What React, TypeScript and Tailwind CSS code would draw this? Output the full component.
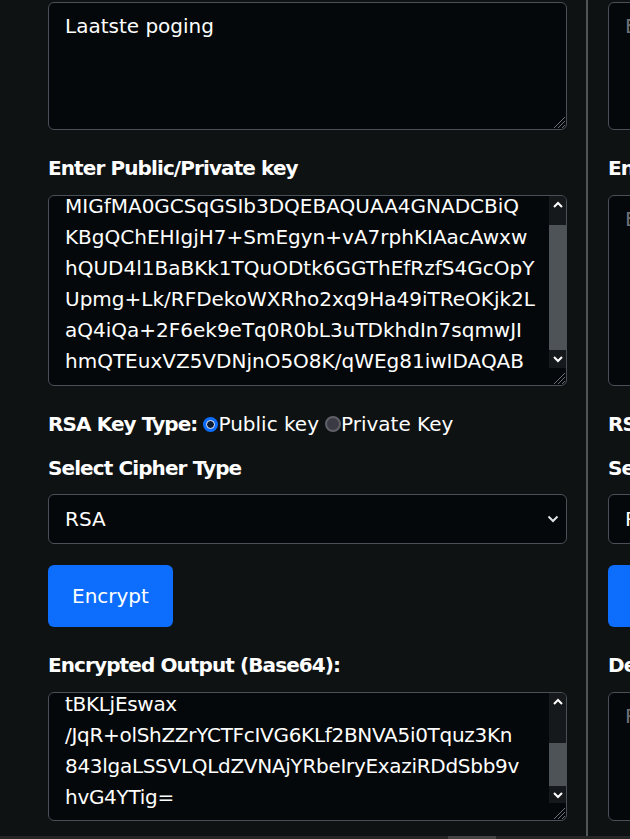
import React from "react";

const keyLines = [
  "MIGfMA0GCSqGSIb3DQEBAQUAA4GNADCBiQ",
  "KBgQChEHIgjH7+SmEgyn+vA7rphKIAacAwxw",
  "hQUD4l1BaBKk1TQuODtk6GGThEfRzfS4GcOpY",
  "Upmg+Lk/RFDekoWXRho2xq9Ha49iTReOKjk2L",
  "aQ4iQa+2F6ek9eTq0R0bL3uTDkhdIn7sqmwJI",
  "hmQTEuxVZ5VDNjnO5O8K/qWEg81iwIDAQAB",
];

const outLines = [
  "tBKLjEswax",
  "/JqR+olShZZrYCTFcIVG6KLf2BNVA5i0Tquz3Kn",
  "843lgaLSSVLQLdZVNAjYRbeIryExaziRDdSbb9v",
  "hvG4YTig=",
];

function Grip() {
  return (
    <svg width="14" height="14" viewBox="0 0 14 14" className="block">
      <line x1="3" y1="14" x2="14" y2="3" stroke="#6c737a" strokeWidth="1" />
      <line x1="7" y1="14" x2="14" y2="7" stroke="#6c737a" strokeWidth="1" />
      <line x1="11" y1="14" x2="14" y2="11" stroke="#6c737a" strokeWidth="1" />
    </svg>
  );
}

function Chevron({ up }: { up?: boolean }) {
  return (
    <svg width="10" height="7" viewBox="0 0 10 7" className="block">
      <polyline
        points={up ? "1,6 5,2 9,6" : "1,1 5,5 9,1"}
        fill="none"
        stroke="#ffffff"
        strokeWidth="2"
      />
    </svg>
  );
}

function Scrollbar({ top, thumb, bottom }: { top: number; thumb: number; bottom: number }) {
  return (
    <div className="w-[17px] shrink-0 flex flex-col">
      <div className="bg-[#16191c] flex justify-center pt-[5px]" style={{ height: top }}>
        <Chevron up />
      </div>
      <div className="bg-[#4e5358]" style={{ height: thumb }} />
      <div className="bg-[#16191c] flex justify-center pt-[6px]" style={{ height: bottom }}>
        <Chevron />
      </div>
      <div className="flex-1 flex items-end justify-end pr-[1px] pb-[1px]">
        <Grip />
      </div>
    </div>
  );
}

function PlainBox({ h, children, placeholder }: { h: string; children?: React.ReactNode; placeholder?: boolean }) {
  return (
    <div
      className={`${h} relative border border-[#495057] rounded-[6px] bg-[#05080a] overflow-hidden px-4 pt-2 text-[20px] leading-[31px] whitespace-pre ${
        placeholder ? "text-[#6c7278]" : "text-white"
      }`}
    >
      {children}
      <div className="absolute right-[1px] bottom-[1px]">
        <Grip />
      </div>
    </div>
  );
}

function Label({ children, className = "" }: { children: React.ReactNode; className?: string }) {
  return (
    <div className={`text-[20px] leading-[30px] font-bold tracking-[-0.045em] text-white whitespace-nowrap ${className}`}>
      {children}
    </div>
  );
}

function Column({ decrypt }: { decrypt?: boolean }) {
  return (
    <div className="w-[519px] shrink-0 flex flex-col">
      {decrypt ? (
        <div className="mt-[2px]">
          <PlainBox h="h-[128px]" placeholder>
            Enter text to decrypt
          </PlainBox>
        </div>
      ) : (
        <div className="mt-[2px]">
          <PlainBox h="h-[128px]">Laatste poging</PlainBox>
        </div>
      )}

      <Label className="mt-[23px]">Enter Public/Private key</Label>

      {decrypt ? (
        <div className="mt-[12px]">
          <PlainBox h="h-[191px]" placeholder>
            Enter key
          </PlainBox>
        </div>
      ) : (
        <div className="mt-[12px] h-[191px] border border-[#495057] rounded-[6px] bg-[#05080a] overflow-hidden flex">
          <div className="flex-1 min-w-0 overflow-hidden pl-4 text-[20px] leading-[31px] text-white whitespace-pre">
            <div className="mt-[-5px]">
              {keyLines.map((l) => (
                <div key={l}>{l}</div>
              ))}
            </div>
          </div>
          <Scrollbar top={29} thumb={125} bottom={18} />
        </div>
      )}

      <div className="mt-[23px] flex items-center h-[30px] text-[20px] text-white whitespace-nowrap">
        <span className="font-bold tracking-[-0.045em]">RSA Key Type:</span>
        <span className="ml-[6px] w-[15px] h-[15px] rounded-full bg-[#0d6efd] flex items-center justify-center shrink-0">
          <span className="w-[9px] h-[9px] rounded-full border border-[#e8f0ff] bg-[#0b1a33]" />
        </span>
        <span>Public key</span>
        <span className="ml-[6px] w-[16px] h-[16px] rounded-full bg-[#3a3b44] border-2 border-[#5f6068] shrink-0" />
        <span>Private Key</span>
      </div>

      <Label className="mt-[14px]">Select Cipher Type</Label>

      <div className="mt-[11px] h-[50px] border border-[#495057] rounded-[6px] bg-[#05080a] flex items-center justify-between pl-4 pr-[7px] text-[20px] leading-[30px] text-white">
        <span>RSA</span>
        <svg width="12" height="8" viewBox="0 0 12 8" className="block">
          <polyline points="1.5,1.5 6,6 10.5,1.5" fill="none" stroke="#dee2e6" strokeWidth="2" />
        </svg>
      </div>

      <div className="mt-[21px] flex">
        <div className="h-[62px] px-6 rounded-[6px] bg-[#0d6efd] text-white text-[20px] leading-[30px] font-medium flex items-center">
          {decrypt ? "Decrypt" : "Encrypt"}
        </div>
      </div>

      <Label className="mt-[23px]">{decrypt ? "Decrypted Output:" : "Encrypted Output (Base64):"}</Label>

      {decrypt ? (
        <div className="mt-[12px]">
          <PlainBox h="h-[129px]" placeholder>
            Plain text output
          </PlainBox>
        </div>
      ) : (
        <div className="mt-[12px] h-[129px] border border-[#495057] rounded-[6px] bg-[#05080a] overflow-hidden flex">
          <div className="flex-1 min-w-0 overflow-hidden pl-4 text-[20px] leading-[31px] text-white whitespace-pre tracking-[-0.015em]">
            <div className="mt-[-4px]">
              {outLines.map((l) => (
                <div key={l}>{l}</div>
              ))}
            </div>
          </div>
          <Scrollbar top={50} thumb={43} bottom={17} />
        </div>
      )}
    </div>
  );
}

export default function App() {
  return (
    <div className="w-[630px] h-[839px] overflow-hidden bg-[#0e1213] flex flex-col font-['DejaVu_Sans',sans-serif]">
      <div className="flex flex-1 min-h-0">
        <div className="pl-[48px] shrink-0 flex">
          <Column />
        </div>
        <div className="ml-[19px] w-[2px] bg-[#50555a] shrink-0" />
        <div className="ml-[20px] shrink-0 flex">
          <Column decrypt />
        </div>
      </div>
      <div className="h-[3px] bg-[#262626] flex shrink-0">
        <div className="ml-[448px] w-[48px] bg-[#444444]" />
      </div>
    </div>
  );
}
